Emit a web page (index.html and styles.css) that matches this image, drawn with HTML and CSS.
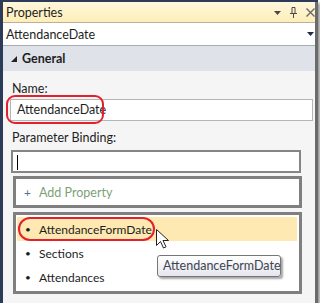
FILE: index.html
```html
<!DOCTYPE html>
<html lang="en">
<head>
  <meta charset="UTF-8" />
  <title>Properties</title>
  <link rel="stylesheet" href="styles.css">
</head>
<body>
  <div class="shot">
    <div class="panel">
      <!-- tool window title -->
      <div class="titlebar">
        <span>Properties</span>
        <div class="tools">
          <svg width="7" height="4" viewBox="0 0 7 4"><path d="M0 0h7L3.5 4z" fill="#4a4a4a"/></svg>
          <svg width="7" height="11" viewBox="0 0 7 11"><path d="M2 0.5h3v6h-3zM0 6.5h7M3.5 6.5v4.5" stroke="#4a4a4a" fill="none"/></svg>
          <svg width="9" height="9" viewBox="0 0 9 9"><path d="M0.5 0.5l8 8M8.5 0.5l-8 8" stroke="#6a6a6a" stroke-width="1.4"/></svg>
        </div>
      </div>

      <div class="objsel">
        <span>AttendanceDate</span>
        <svg width="7" height="4" viewBox="0 0 7 4"><path d="M0 0h7L3.5 4z" fill="#1e2b44"/></svg>
      </div>

      <div class="section-head">
        <svg width="6" height="6" viewBox="0 0 6 6"><path d="M6 0v6H0z" fill="#222"/></svg>
        <span>General</span>
      </div>

      <div class="props">
        <div class="label name-label">Name:</div>
        <div class="field name-field">AttendanceDate</div>
        <div class="label bind-label">Parameter Binding:</div>
        <div class="field bind-field"><span class="caret"></span></div>
        <div class="box add-box"><span class="plus">+</span><span>Add Property</span></div>
        <div class="box list-box">
          <div class="item selected"><span class="dot">•</span>AttendanceFormDate</div>
          <div class="item"><span class="dot">•</span>Sections</div>
          <div class="item"><span class="dot">•</span>Attendances</div>
        </div>
      </div>
    </div>

    <!-- annotations over the screenshot -->
    <div class="ring ring-name"></div>
    <div class="ring ring-item"></div>
    <svg class="cursor" width="13" height="20" viewBox="0 0 13 20"><path d="M0.5 0.5v16l4-4 3 6.5 2.5-1.2-3-6.3h5.5z" fill="#fff" stroke="#222" stroke-width="1"/></svg>
    <div class="tooltip">AttendanceFormDate</div>
  </div>
</body>
</html>
```

FILE: styles.css
```css
:root {
  --navy:#2b3b58;
  --panel:#f5f5f5;
  --frame:#7f7f7f;
  --red:#e3202c;
}
*{box-sizing:border-box;margin:0;padding:0}
body{background:#fff;font-family:Lato,"Open Sans",Arial,sans-serif;font-size:12.5px;color:#1e1e1e}
.shot{position:relative;width:318px;height:303px;background:var(--navy);padding:2px 0 0 3px;box-shadow:2px 3px 3px rgba(0,0,0,.45)}
.panel{height:100%;background:var(--panel);border-right:3px solid #6b6b6b;display:flex;flex-direction:column}

.titlebar{height:21px;display:flex;align-items:center;justify-content:space-between;padding:0 0 0 3px;background:linear-gradient(#fff7dc,#fdeeb8);border-bottom:1px solid #b8b29a;color:#1e1e1e}
.tools{display:flex;align-items:center;gap:9px;padding-right:0}
.tools svg:first-child{margin-top:2px}

.objsel{height:23px;display:flex;align-items:center;justify-content:space-between;padding:0 1px 0 3px;background:#fff;border-bottom:1px solid #a9acb4}
.section-head{height:25px;display:flex;align-items:center;gap:5px;padding-left:8px;background:#dfe2e9;font-weight:bold}
.section-head svg{margin-top:1px}

.props{display:flex;flex-direction:column;padding-top:10px}
.label{line-height:16px;padding-left:9px}
.name-label{margin-bottom:2px}
.bind-label{margin-top:9px;margin-bottom:4px}
.field{background:#fff;height:22px;line-height:20px}
.name-field{margin:0 2px 0 7px;border:1px solid #b5b5b5;padding-left:6px}
.bind-field{margin:0 14px 0 8px;border:2px solid #858585;height:23px;position:relative}
.caret{position:absolute;left:4px;top:3px;width:1px;height:15px;background:#000}

.box{margin:3px 13px 0 10px;border:3px solid var(--frame);background:#fff}
.add-box{height:32px;display:flex;align-items:center;color:#7d9f76;font-size:12.5px}
.plus{width:23px;text-align:center;color:#5a6f8a;font-size:12px}
.list-box{margin-top:4px;height:82px;padding:2px 2px 0 1px;font-size:12px}
.item{height:24px;display:flex;align-items:center}
.item.selected{background:#fde9b1}
.dot{width:22px;text-align:center;font-size:10px}

.ring{position:absolute;border:2px solid var(--red)}
.ring-name{left:6px;top:95px;width:98px;height:29px;border-radius:9px}
.ring-item{left:18px;top:217px;width:137px;height:24px;border-radius:12px}
.cursor{position:absolute;left:156px;top:229px}
.tooltip{position:absolute;left:157px;top:255px;width:124px;height:22px;padding-left:5px;line-height:20px;border:1px solid #767676;border-radius:3px;background:linear-gradient(#fff,#e5e6ee);color:#404552;box-shadow:2px 2px 2px rgba(0,0,0,.35)}
```
